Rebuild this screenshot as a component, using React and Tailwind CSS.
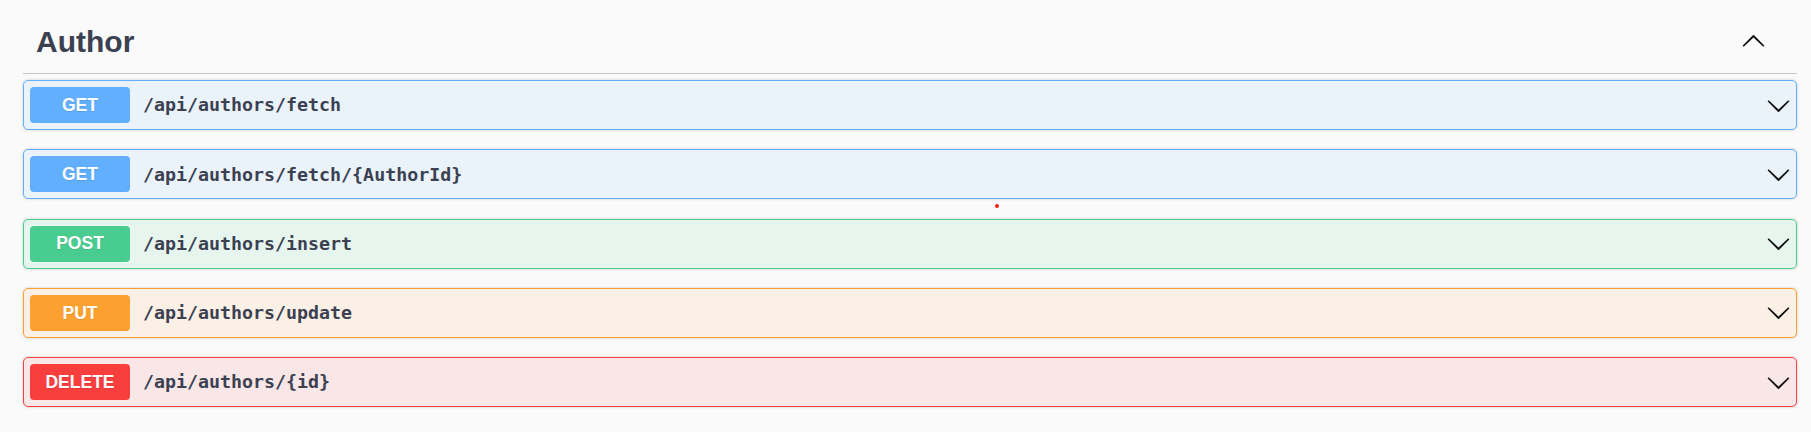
import React from "react";

const endpoints = [
  { method: "GET", path: "/api/authors/fetch" },
  { method: "GET", path: "/api/authors/fetch/{AuthorId}" },
  { method: "POST", path: "/api/authors/insert" },
  { method: "PUT", path: "/api/authors/update" },
  { method: "DELETE", path: "/api/authors/{id}" },
];

const methodStyles = {
  GET: {
    block: "border-[#61affe] bg-[rgba(97,175,254,0.1)]",
    badge: "bg-[#61affe]",
  },
  POST: {
    block: "border-[#49cc90] bg-[rgba(73,204,144,0.1)]",
    badge: "bg-[#49cc90]",
  },
  PUT: {
    block: "border-[#fca130] bg-[rgba(252,161,48,0.1)]",
    badge: "bg-[#fca130]",
  },
  DELETE: {
    block: "border-[#f93e3e] bg-[rgba(249,62,62,0.1)]",
    badge: "bg-[#f93e3e]",
  },
};

const Arrow = ({ up }) => (
  <svg
    width="25"
    height="25"
    viewBox="0 0 20 20"
    className={up ? "rotate-180" : ""}
    fill="#111"
  >
    <path d="M17.418 6.109c.272-.268.709-.268.979 0s.271.701 0 .969l-7.908 7.83c-.27.268-.707.268-.979 0l-7.908-7.83c-.27-.268-.27-.701 0-.969.271-.268.709-.268.979 0L10 13.25l7.418-7.141z" />
  </svg>
);

const OperationBlock = ({ method, path }) => {
  const style = methodStyles[method];
  return (
    <div
      className={`flex h-[50px] items-center rounded-[5px] border pl-[6px] pr-[5px] shadow-[0_0_3px_rgba(0,0,0,0.19)] ${style.block}`}
    >
      <span
        className={`flex h-[36px] w-[100px] items-center justify-center rounded-[4px] text-[17.5px] font-bold text-white [text-shadow:0_1px_0_rgba(0,0,0,0.1)] ${style.badge}`}
        style={{ fontFamily: '"Liberation Sans", Arial, sans-serif' }}
      >
        {method}
      </span>
      <span
        className="flex-1 px-[13px] text-[18.3px] font-bold text-[#3b4151]"
        style={{ fontFamily: '"DejaVu Sans Mono", "Liberation Mono", monospace' }}
      >
        {path}
      </span>
      <Arrow />
    </div>
  );
};

export default function App() {
  return (
    <div className="relative h-[432px] w-full bg-[#fafafa] pl-[23px] pr-[14px]">
      {/* Tag header */}
      <div className="flex h-[74px] items-center border-b border-[#c4c6cb] pl-[13px] pr-[31px] pt-[10px]">
        <h3
          className="flex-1 text-[30px] font-bold leading-[30px] text-[#3b4151]"
          style={{ fontFamily: '"Liberation Sans", Arial, sans-serif' }}
        >
          Author
        </h3>
        <Arrow up />
      </div>

      {/* Operations */}
      <div className="mt-[6px] flex flex-col gap-[19.25px]">
        {endpoints.map((ep) => (
          <OperationBlock key={ep.path} method={ep.method} path={ep.path} />
        ))}
      </div>

      <span className="absolute left-[995px] top-[204px] h-[4px] w-[4px] rounded-full bg-[#e5201d]" />
    </div>
  );
}
